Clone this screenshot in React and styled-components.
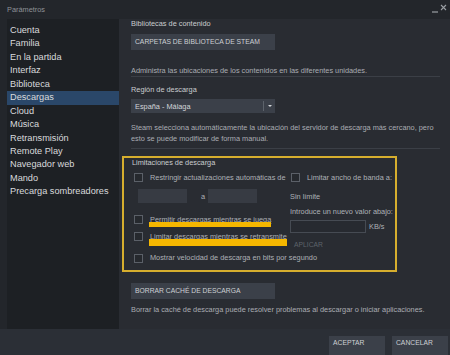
import React from 'react';
import styled, { createGlobalStyle } from 'styled-components';

const GlobalStyle = createGlobalStyle`
  html, body {
    margin: 0;
    padding: 0;
    background: #23262b;
    overflow: hidden;
  }
  * {
    box-sizing: border-box;
  }
`;

const menu = [
  'Cuenta', 'Familia', 'En la partida', 'Interfaz', 'Biblioteca', 'Descargas',
  'Cloud', 'Música', 'Retransmisión', 'Remote Play', 'Navegador web', 'Mando',
  'Precarga sombreadores',
];

const Checkbox = () => <Box />;

const App = () => {
  return (
    <Window>
      <GlobalStyle />
      <TitleBar>
        <span>Parámetros</span>
        <WindowControls>
          <svg width="6" height="12" viewBox="0 0 6 12">
            <line x1="0" y1="11" x2="6" y2="11" stroke="#9a9ea3" strokeWidth="1.2" />
          </svg>
          <svg width="7" height="12" viewBox="0 0 7 12">
            <path d="M1 4 L6 9 M6 4 L1 9" stroke="#9a9ea3" strokeWidth="1.1" />
          </svg>
        </WindowControls>
      </TitleBar>

      <Main>
        <Sidebar>
          {menu.map(item => (
            <MenuItem key={item} $active={item === 'Descargas'}>{item}</MenuItem>
          ))}
        </Sidebar>

        <Content>
          <SectionTitle>Bibliotecas de contenido</SectionTitle>
          <Button $top={5}>CARPETAS DE BIBLIOTECA DE STEAM</Button>
          <Description $top={16}>Administra las ubicaciones de los contenidos en las diferentes unidades.</Description>
          <Separator />

          <SectionTitle $top={8}>Región de descarga</SectionTitle>
          <Dropdown>
            <span>España - Málaga</span>
            <DropArrow />
          </Dropdown>
          <Paragraph>
            Steam selecciona automáticamente la ubicación del servidor de descarga más cercano, pero esto se puede modificar de forma manual.
          </Paragraph>
          <Separator $top={4.5} />

          <LimitsBox>
            <BoxTitle>Limitaciones de descarga</BoxTitle>
            <Columns>
              <LeftColumn>
                <CheckRow>
                  <Checkbox />
                  <Label>Restringir actualizaciones automáticas de</Label>
                </CheckRow>
                <TimeRow>
                  <TimeInput />
                  <To>a</To>
                  <TimeInput />
                </TimeRow>
                <CheckRow $top={10.5}>
                  <Checkbox />
                  <Label><Marked $bar={5}>Permitir descargas mientras se juega</Marked></Label>
                </CheckRow>
                <CheckRow $top={5}>
                  <Checkbox />
                  <Label><Marked $bar={7}>Limitar descargas mientras se retransmite</Marked></Label>
                </CheckRow>
              </LeftColumn>

              <RightColumn>
                <CheckRow>
                  <Checkbox />
                  <Label>Limitar ancho de banda a:</Label>
                </CheckRow>
                <Label as="div" $top={8.5}>Sin límite</Label>
                <Label as="div" $top={5}>Introduce un nuevo valor abajo:</Label>
                <RateRow>
                  <RateInput />
                  <Label>KB/s</Label>
                </RateRow>
                <Apply>APLICAR</Apply>
              </RightColumn>
            </Columns>
            <CheckRow $top={5}>
              <Checkbox />
              <Label>Mostrar velocidad de descarga en bits por segundo</Label>
            </CheckRow>
          </LimitsBox>

          <Button $top={11}>BORRAR CACHÉ DE DESCARGA</Button>
          <Description $top={6}>Borrar la caché de descarga puede resolver problemas al descargar o iniciar aplicaciones.</Description>
        </Content>
      </Main>

      <Footer>
        <FooterButton>ACEPTAR</FooterButton>
        <FooterButton>CANCELAR</FooterButton>
      </Footer>
    </Window>
  );
};

const Window = styled.div`
  width: 450px;
  height: 355px;
  display: flex;
  flex-direction: column;
  background: #23262b;
  font-family: "Liberation Sans", Arial, sans-serif;
`;

const TitleBar = styled.div`
  height: 19px;
  flex: none;
  display: flex;
  align-items: center;
  justify-content: space-between;
  padding: 0 3px 0 7px;
  font-size: 7.35px;
  line-height: 19px;
  color: #8e9297;
`;

const WindowControls = styled.div`
  display: flex;
  align-items: flex-start;
  gap: 2px;
  height: 19px;
  padding-top: 1px;
`;

const Main = styled.div`
  flex: 1;
  display: flex;
  padding-left: 7px;
  min-height: 0;
`;

const Sidebar = styled.div`
  width: 112px;
  flex: none;
  background: #1d2024;
  padding-top: 5px;
`;

const MenuItem = styled.div`
  height: 13.45px;
  line-height: 13.45px;
  padding-left: 3px;
  font-size: 9.2px;
  color: #d9dadc;
  white-space: nowrap;
  background: ${p => (p.$active ? '#2a4769' : 'transparent')};
`;

const Content = styled.div`
  flex: 1;
  background: #292c32;
  padding: 0 10px 0 12px;
`;

const SectionTitle = styled.div`
  margin-top: ${p => p.$top || 0}px;
  font-size: 7.35px;
  line-height: 10px;
  color: #c9ccd0;
`;

const Button = styled.div`
  margin-top: ${p => p.$top || 0}px;
  width: 144px;
  height: 16px;
  line-height: 16px;
  padding-left: 4px;
  background: #3b4049;
  color: #cdd0d4;
  font-size: 6.75px;
  white-space: nowrap;
`;

const Description = styled.div`
  margin-top: ${p => p.$top || 0}px;
  font-size: 7.35px;
  line-height: 10px;
  color: #a9adb2;
  white-space: nowrap;
`;

const Separator = styled.div`
  margin-top: ${p => p.$top || 0}px;
  height: 1px;
  margin-right: 0;
  background: #3b3f46;
`;

const Dropdown = styled.div`
  margin-top: 4px;
  width: 144px;
  height: 14px;
  display: flex;
  align-items: center;
  justify-content: space-between;
  padding-left: 4px;
  background: #3b4049;
  font-size: 7.35px;
  color: #d3d6d9;
`;

const DropArrow = styled.span`
  width: 12px;
  height: 10px;
  border-left: 1px solid #5d636b;
  position: relative;

  &::after {
    content: '';
    position: absolute;
    left: 4px;
    top: 4px;
    border-left: 2px solid transparent;
    border-right: 2px solid transparent;
    border-top: 2.5px solid #d3d6d9;
  }
`;

const Paragraph = styled.div`
  margin-top: 8.5px;
  max-width: 312px;
  font-size: 7.35px;
  line-height: 11px;
  color: #a9adb2;
`;

const LimitsBox = styled.div`
  margin: 7px 0 0 -9px;
  width: 275px;
  border: 2px solid #d6ae2e;
  padding: 0 0 5.5px 9px;
`;

const BoxTitle = styled.div`
  margin-left: -1px;
  font-size: 7.35px;
  line-height: 10px;
  color: #c9ccd0;
`;

const Columns = styled.div`
  display: grid;
  grid-template-columns: 158px 1fr;
  margin-top: 3.5px;
`;

const LeftColumn = styled.div`
  display: flex;
  flex-direction: column;
`;

const RightColumn = styled.div`
  display: flex;
  flex-direction: column;
  margin-left: -1px;
`;

const CheckRow = styled.div`
  margin-top: ${p => p.$top || 0}px;
  height: 12px;
  display: flex;
  align-items: center;
  gap: 7px;
  padding-left: ${p => p.$pad || 0}px;
`;

const Box = styled.span`
  width: 9px;
  height: 9px;
  flex: none;
  border: 1px solid #5b6068;
  background: #26292e;
  margin-left: 1px;
`;

const Label = styled.span`
  display: block;
  margin-top: ${p => p.$top || 0}px;
  font-size: 7.35px;
  line-height: 10px;
  color: #adb1b6;
  white-space: nowrap;
`;

const Marked = styled.span`
  position: relative;
  text-decoration: underline;
  text-decoration-thickness: 0.5px;

  &::after {
    content: '';
    position: absolute;
    left: -1px;
    right: 0;
    top: 7.8px;
    height: ${p => p.$bar}px;
    background: #f5b700;
  }
`;

const TimeRow = styled.div`
  margin: 5.5px 0 0 5px;
  height: 14px;
  display: flex;
  align-items: center;
`;

const TimeInput = styled.span`
  width: 49px;
  height: 14px;
  background: #373b43;
`;

const To = styled.span`
  margin: 0 3px 0 14px;
  font-size: 7.35px;
  color: #adb1b6;
`;

const RateRow = styled.div`
  margin-top: 3px;
  display: flex;
  align-items: center;
  gap: 3px;
`;

const RateInput = styled.span`
  width: 76px;
  height: 13px;
  border: 1px solid #464b53;
  background: #272a30;
`;

const Apply = styled.div`
  margin: 8px 0 -2px 4px;
  font-size: 6.75px;
  line-height: 8px;
  color: #5d636b;
`;

const Footer = styled.div`
  height: 26px;
  flex: none;
  display: flex;
  justify-content: flex-end;
  align-items: flex-end;
  gap: 7px;
  padding-right: 2px;
  background: #2b2f36;
`;

const FooterButton = styled.div`
  width: 56px;
  height: 19px;
  line-height: 14px;
  padding-left: 4px;
  background: #3b4049;
  color: #cdd0d4;
  font-size: 6.75px;
`;

export default App;
